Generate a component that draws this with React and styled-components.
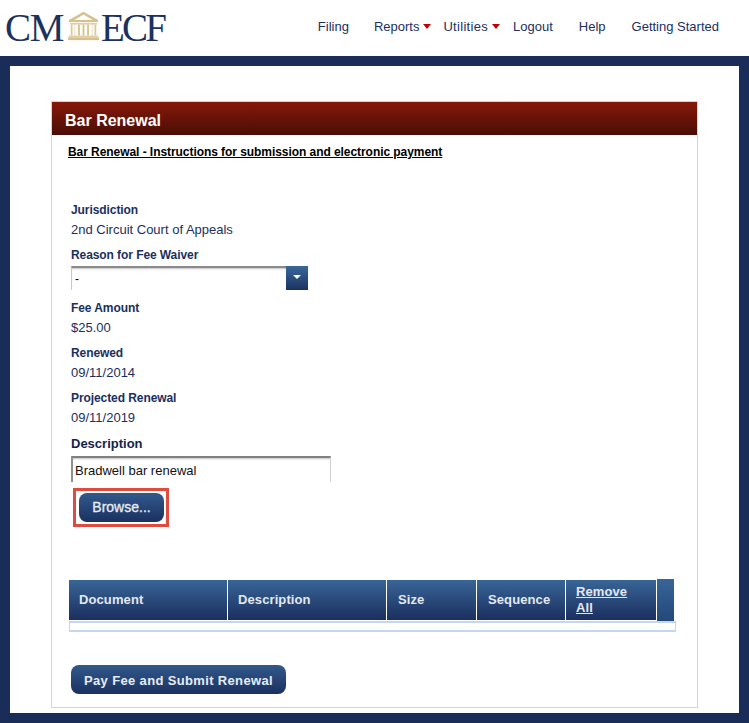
import styled, { createGlobalStyle } from 'styled-components';

const navy = "#1a2c58";

const GlobalStyle = createGlobalStyle`
    html, body {
        margin: 0;
        padding: 0;
        background-color: ${navy};
        font-family: "Liberation Sans", Arial, sans-serif;
    }
`;

const fields = [
    { label: "Fee Amount", value: "$25.00" },
    { label: "Renewed", value: "09/11/2014" },
    { label: "Projected Renewal", value: "09/11/2019" }
];

const columns = [
    { name: "Document", width: 159, pad: 10 },
    { name: "Description", width: 159, pad: 10 },
    { name: "Size", width: 90, pad: 11 },
    { name: "Sequence", width: 89, pad: 11 },
    { name: "Remove All", width: 91, pad: 10, link: true }
];

function CourtLogo() {
    return (
        <LogoMark width="31" height="30" viewBox="0 0 34 31">
            <path d="M17 0 L33 9 V11 H1 V9 Z M17 3 L7 9 H27 Z" fill="#d6c08c" fillRule="evenodd" />
            <rect x="2" y="12" width="30" height="2" fill="#e0cfa6" />
            <rect x="3" y="14" width="2" height="12" fill="#dcc99a" />
            <rect x="7" y="14" width="1" height="12" fill="#e8dcbd" />
            <rect x="11" y="14" width="2" height="12" fill="#d8c188" />
            <rect x="16" y="14" width="2" height="12" fill="#d8c188" />
            <rect x="21" y="14" width="2" height="12" fill="#d8c188" />
            <rect x="26" y="14" width="1" height="12" fill="#e8dcbd" />
            <rect x="29" y="14" width="2" height="12" fill="#dcc99a" />
            <rect x="1" y="26" width="32" height="2" fill="#e0cfa6" />
            <rect x="0" y="28" width="34" height="3" fill="#d6c08c" />
        </LogoMark>
    );
}

export default function App() {
    return (
        <>
            <GlobalStyle />
            <Header>
                <Logo>
                    <LogoText $tracking={-1.3}>CM</LogoText>
                    <CourtLogo />
                    <LogoText $tracking={-2.8}>ECF</LogoText>
                </Logo>
                <Nav>
                    <NavItem $left={0}>Filing</NavItem>
                    <NavItem $left={25}>Reports<Caret /></NavItem>
                    <NavItem $left={12} $tracking={0.3}>Utilities<Caret /></NavItem>
                    <NavItem $left={13}>Logout</NavItem>
                    <NavItem $left={26}>Help</NavItem>
                    <NavItem $left={26}>Getting Started</NavItem>
                </Nav>
            </Header>
            <Page>
                <Card>
                    <Title>Bar Renewal</Title>
                    <Instructions>Bar Renewal - Instructions for submission and electronic payment</Instructions>
                    <Form>
                        <Field>
                            <Label>Jurisdiction</Label>
                            <Value>2nd Circuit Court of Appeals</Value>
                        </Field>
                        <Label>Reason for Fee Waiver</Label>
                        <Select>
                            <SelectText>-</SelectText>
                            <SelectButton><SelectArrow /></SelectButton>
                        </Select>
                        {fields.map((field) => (
                            <Field key={field.label}>
                                <Label>{field.label}</Label>
                                <Value>{field.value}</Value>
                            </Field>
                        ))}
                        <DescriptionLabel>Description</DescriptionLabel>
                        <Input defaultValue="Bradwell bar renewal" />
                        <Highlight>
                            <BrowseButton>Browse...</BrowseButton>
                        </Highlight>
                    </Form>
                    <Table>
                        <TableHead>
                            {columns.map((column) => (
                                <HeadCell key={column.name} $width={column.width} $pad={column.pad}>
                                    {column.link ? <HeadLink>{column.name}</HeadLink> : column.name}
                                </HeadCell>
                            ))}
                            <ScrollCell />
                        </TableHead>
                        <EmptyRow />
                    </Table>
                    <Footer>
                        <PayButton>Pay Fee and Submit Renewal</PayButton>
                    </Footer>
                </Card>
            </Page>
        </>
    );
}

const Header = styled.header`
    height: 56px;
    background-color: #FFFFFF;
    display: flex;
    justify-content: space-between;
    padding: 0 30px 0 5px;
    box-sizing: border-box;
`;

const Logo = styled.div`
    display: flex;
    align-items: flex-start;
    padding-top: 11px;
`;

const LogoMark = styled.svg`
    margin: 0 2px 0 5px;
`;

const LogoText = styled.span`
    font-family: "Liberation Serif", serif;
    font-size: 39px;
    line-height: 33px;
    letter-spacing: ${props => props.$tracking}px;
    color: #1b3260;
`;

const Nav = styled.nav`
    display: flex;
    align-items: flex-start;
    padding-top: 19px;
`;

const NavItem = styled.a`
    display: flex;
    align-items: center;
    margin-left: ${props => props.$left}px;
    font-size: 13px;
    line-height: 15px;
    letter-spacing: ${props => props.$tracking || 0}px;
    color: #1b2f5e;
    white-space: nowrap;
`;

const Caret = styled.i`
    width: 0;
    height: 0;
    margin-left: 4px;
    border-top: 5px solid #c00000;
    border-left: 4px solid transparent;
    border-right: 4px solid transparent;
`;

const Page = styled.main`
    margin: 10px;
    height: 647px;
    background-color: #FFFFFF;
    padding: 35px 41px 0 41px;
    box-sizing: border-box;
`;

const Card = styled.section`
    height: 607px;
    box-sizing: border-box;
    border: 1px solid #c5d7ec;
`;

const Title = styled.h1`
    margin: 0;
    height: 33px;
    padding-left: 13px;
    background: linear-gradient(#861809, #4a0e06);
    font-size: 16px;
    font-weight: 700;
    line-height: 37px;
    color: #FFFFFF;
`;

const Instructions = styled.a`
    display: block;
    margin: 10px 0 0 16px;
    font-size: 12px;
    font-weight: 700;
    line-height: 14px;
    letter-spacing: -0.06px;
    color: #000000;
    text-decoration: underline;
`;

const Form = styled.div`
    display: flex;
    flex-direction: column;
    align-items: flex-start;
    padding: 44px 0 0 19px;
`;

const Field = styled.div`
    display: flex;
    flex-direction: column;
    gap: 5px;
    margin-bottom: 12px;
`;

const Label = styled.label`
    font-size: 12px;
    font-weight: 700;
    line-height: 14px;
    letter-spacing: -0.08px;
    color: #1b2f5e;
`;

const Value = styled.span`
    font-size: 13px;
    line-height: 15px;
    margin-bottom: -1px;
    color: #1b2f5e;
`;

const Select = styled.div`
    display: flex;
    width: 237px;
    height: 24px;
    margin: 4px 0 11px 0;
    box-sizing: border-box;
    border-top: 2px solid #8a8a8a;
    border-left: 1px solid #c8c8c8;
    box-shadow: inset 0 2px 2px -1px #c4c4c4;
`;

const SelectText = styled.span`
    flex: 1;
    padding: 4px 0 0 3px;
    font-size: 12px;
    line-height: 14px;
    color: #000000;
`;

const SelectButton = styled.span`
    width: 22px;
    margin-top: -2px;
    display: flex;
    justify-content: center;
    padding-top: 9px;
    box-sizing: border-box;
    background: linear-gradient(#3a689c, #1b3260);
`;

const SelectArrow = styled.i`
    width: 0;
    height: 0;
    border-top: 4px solid #FFFFFF;
    border-left: 4px solid transparent;
    border-right: 4px solid transparent;
`;

const DescriptionLabel = styled.label`
    font-size: 13px;
    font-weight: 700;
    line-height: 15px;
    color: #14244a;
`;

const Input = styled.input`
    width: 260px;
    height: 26px;
    margin-top: 5px;
    padding: 0 0 0 2px;
    box-sizing: border-box;
    border: 0;
    border-top: 2px solid #808080;
    border-left: 2px solid #909090;
    border-right: 1px solid #d0d0d0;
    box-shadow: inset 0 2px 2px -1px #c4c4c4;
    outline: none;
    font-family: "Liberation Sans", Arial, sans-serif;
    font-size: 13px;
    color: #111111;
`;

const Highlight = styled.div`
    margin: 6px 0 0 2px;
    padding: 2px 2px 2px 3px;
    border: 3px solid #de4c41;
`;

const BrowseButton = styled.button`
    display: block;
    width: 85px;
    height: 29px;
    padding: 0 0 2px 0;
    border: 0;
    border-radius: 8px;
    background: linear-gradient(#32598c, #1a3160);
    font-family: "Liberation Sans", Arial, sans-serif;
    font-size: 14px;
    -webkit-text-stroke: 0.3px #e8edf4;
    color: #e8edf4;
`;

const PayButton = styled(BrowseButton)`
    width: 215px;
    padding: 1px 0 0 0;
    font-size: 13px;
    font-weight: 700;
    letter-spacing: 0.35px;
    -webkit-text-stroke: 0;
`;

const Table = styled.div`
    margin: 52px 0 0 17px;
    width: 607px;
`;

const TableHead = styled.div`
    display: flex;
    align-items: center;
    width: 605px;
    height: 42px;
`;

const HeadCell = styled.div`
    width: ${props => props.$width}px;
    height: 40px;
    display: flex;
    align-items: center;
    padding: 0 10px 0 ${props => props.$pad}px;
    box-sizing: border-box;
    border-right: 1px solid #FFFFFF;
    background: linear-gradient(#386597, #1b2f5e);
    font-size: 13px;
    font-weight: 700;
    line-height: 16px;
    letter-spacing: 0.1px;
    color: #e4e9f1;
`;

const HeadLink = styled.a`
    text-decoration: underline;
`;

const ScrollCell = styled.div`
    flex: 1;
    height: 42px;
    background: linear-gradient(#386597, #24487a);
`;

const EmptyRow = styled.div`
    height: 11px;
    box-sizing: border-box;
    border: 1px solid #c5d6f0;
    border-width: 2px 1px 2px 1px;
`;

const Footer = styled.div`
    margin: 33px 0 0 19px;
`;
